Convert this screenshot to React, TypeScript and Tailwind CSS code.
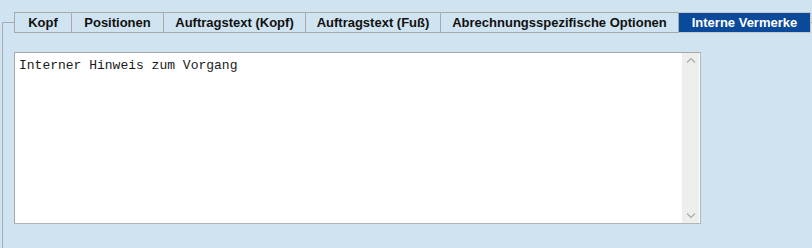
const TABS = [
  { label: "Kopf", width: "w-[58px]" },
  { label: "Positionen", width: "w-[92px]" },
  { label: "Auftragstext (Kopf)", width: "w-[142px]" },
  { label: "Auftragstext (Fuß)", width: "w-[135px]" },
  { label: "Abrechnungsspezifische Optionen", width: "w-[238px]" },
  { label: "Interne Vermerke", width: "w-[132px]", active: true },
];

export default function App() {
  return (
    <div className="w-[812px] h-[248px] overflow-hidden bg-[#cfe3f0] pt-[22px] pl-[2px] font-['Liberation_Sans',Arial,sans-serif]">
      <div className="h-[260px] border-l border-t border-[#a4adb5]">
        {/* tab strip */}
        <div className="flex mt-[-11px] ml-[11px] h-[21px]">
          {TABS.map((t, i) => (
            <div
              key={t.label}
              className={`${t.width} flex items-center justify-center border-y border-r border-[#a9a9a9] text-[13px] font-bold leading-none
                ${i === 0 ? "border-l" : ""}
                ${t.active ? "bg-[#0b4a9a] text-white border-[#c8c8c8]" : "bg-[#cfe3f0] text-[#111]"}`}
            >
              {t.label}
            </div>
          ))}
        </div>

        {/* memo field */}
        <div className="flex ml-[11px] mt-[19px] w-[687px] h-[172px] bg-white border border-[#b4b4b4] border-t-[#a8a8a8] border-l-[#a8a8a8]">
          <div className="flex-1 pl-[4px] pt-[5px] font-['Liberation_Mono','Courier_New',monospace] text-[13px] leading-[16px] text-[#1a1a1a]">
            Interner Hinweis zum Vorgang
          </div>
          <div className="w-[17px] mr-[1px] flex flex-col justify-between items-center bg-[#eeeeee] py-[4px]">
            <svg width="10" height="6" viewBox="0 0 10 6" fill="none" stroke="#a8a8a8" strokeWidth="1.2">
              <path d="M1 5.5 L5 1.5 L9 5.5" />
            </svg>
            <svg width="10" height="6" viewBox="0 0 10 6" fill="none" stroke="#a8a8a8" strokeWidth="1.2">
              <path d="M1 0.5 L5 4.5 L9 0.5" />
            </svg>
          </div>
        </div>
      </div>
    </div>
  );
}
